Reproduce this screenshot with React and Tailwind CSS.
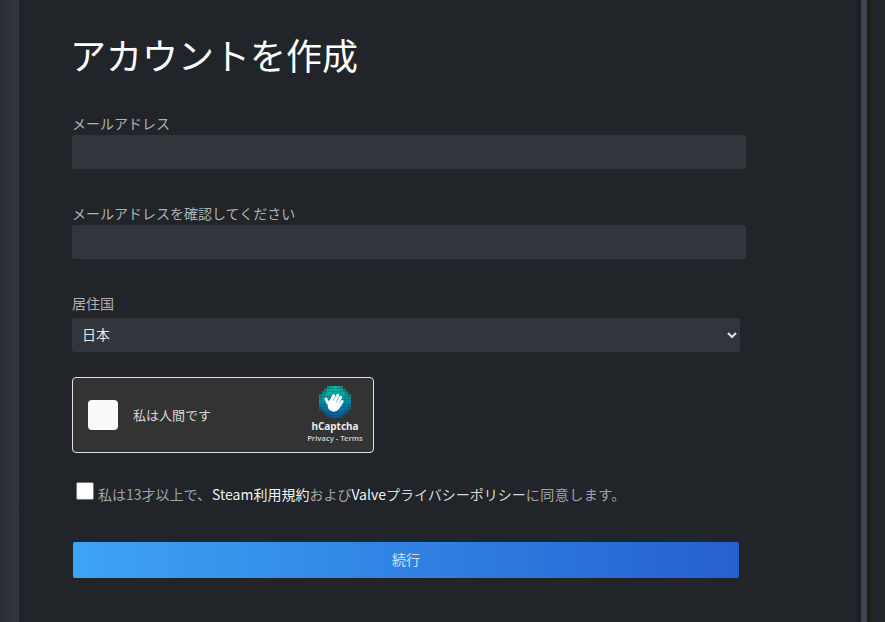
const N = 12;
const C = 32 / N;
const cells = [];
for (let y = 0; y < N; y++) {
  for (let x = 0; x < N; x++) {
    const dx = x - 5.5;
    const dy = y - 5.5;
    const d = Math.abs(dx) + Math.abs(dy);
    if (d > 8.5) continue;
    const t = y / (N - 1);
    const r = Math.round(0 + 6 * t);
    const g = Math.round(190 - 100 * t);
    const b = Math.round(170 - 5 * t);
    cells.push({ x, y, fill: `rgb(${r},${g},${b})`, opacity: d > 7.5 ? 0.6 : d > 6.5 ? 0.85 : 1 });
  }
}

function Logo() {
  return (
    <svg width="32" height="32" viewBox="0 0 32 32" className="block">
      {cells.map((c) => (
        <rect key={c.x + '-' + c.y} x={c.x * C} y={c.y * C} width={C} height={C} fill={c.fill} opacity={c.opacity} />
      ))}
      <g transform="rotate(28 15 18)">
        <g stroke="#ffffff" strokeWidth="3" strokeLinecap="round" fill="none">
          <path d="M9.5 20 L5.5 17.5" />
          <path d="M11 17 L10.8 11" />
          <path d="M14.3 16 L14.3 8.5" />
          <path d="M17.6 16 L17.8 9" />
          <path d="M20.6 17 L21 12" />
        </g>
        <path d="M9.5 15.5 L22 15.5 L21.8 20 Q20 26 15 25.5 Q10.5 25 9.5 20 Z" fill="#ffffff" />
      </g>
    </svg>
  );
}

export default function App() {
  return (
    <div className="flex h-[622px] w-[885px] overflow-hidden bg-[#212429] font-['Noto_Sans_CJK_JP','Noto_Sans',sans-serif]">
      <div className="w-[19px] shrink-0 bg-gradient-to-r from-[#2a2e36] to-[#31353e]" />
      <main className="w-[838px] shrink-0 pl-[53px] pr-[111px]">
        <h1 className="mt-[29px] -ml-[2px] h-[50px] text-[36px] leading-[50px] font-normal text-white">アカウントを作成</h1>
        <label className="mt-[34px] block h-[22px] text-[14px] leading-[20px] text-[#afb2b5]">メールアドレス</label>
        <input className="block h-[34px] w-[674px] rounded-[3px] bg-[#32353c] outline-none" />
        <label className="mt-[34px] block h-[22px] text-[14px] leading-[20px] text-[#afb2b5]">メールアドレスを確認してください</label>
        <input className="block h-[34px] w-[674px] rounded-[3px] bg-[#32353c] outline-none" />
        <label className="mt-[34px] block h-[25px] text-[14px] leading-[20px] text-[#afb2b5]">居住国</label>
        <select className="block h-[34px] w-[668px] rounded-[3px] bg-[#32353c] pb-[3px] pl-[6px] text-[14px] text-[#e2e4e6] outline-none" defaultValue="日本">
          <option>日本</option>
        </select>
        <div className="mt-[25px] flex h-[76px] w-[302px] items-center rounded-[4px] border border-[#e0e0e0] bg-[#333333] pl-[15px] pr-[10px]">
          <div className="h-[30px] w-[30px] rounded-[4px] bg-[#fafafa]" />
          <span className="ml-[15px] flex-1 text-[13px] text-[#d5d5d5]">私は人間です</span>
          <div className="flex w-[56px] flex-col items-center">
            <Logo />
            <span className="mt-[1px] text-[10px] leading-[14px] font-bold text-[#ebebeb] font-['Noto_Sans',sans-serif]">hCaptcha</span>
            <span className="text-[7.6px] leading-[11px] font-semibold whitespace-nowrap text-[#c8c8c8] font-['Noto_Sans',sans-serif]">Privacy - Terms</span>
          </div>
        </div>
        <div className="mt-[29px] flex h-[26px] items-start pl-[4px]">
          <span className="h-[18px] w-[18px] shrink-0 rounded-[2px] border border-[#767676] bg-white" />
          <p className="mt-[1px] ml-[4px] text-[14px] leading-[22px] whitespace-nowrap text-[#a0a3a7]">
            私は13才以上で、<span className="ml-[1px] text-[#f2f3f4]">Steam利用規約</span>および<span className="text-[#f2f3f4]">Valve</span><span className="text-[#d8dadc]">プライバシーポリシー</span><span className="tracking-[0.5px]">に同意します。</span>
          </p>
        </div>
        <button className="mt-[34px] block h-[36px] w-[666px] translate-x-[1px] rounded-[2px] bg-gradient-to-r from-[#3ea4f4] to-[#2660d0] pb-[2px] text-[14px] text-[#d0e2f4]">続行</button>
      </main>
      <div className="w-[4px] shrink-0 bg-[#1b1e22]" />
      <div className="w-[6px] shrink-0 bg-[#3e434d]" />
      <div className="w-[4px] shrink-0 bg-[#1f1c1c]" />
      <div className="flex-1 bg-[#212429]" />
    </div>
  );
}
